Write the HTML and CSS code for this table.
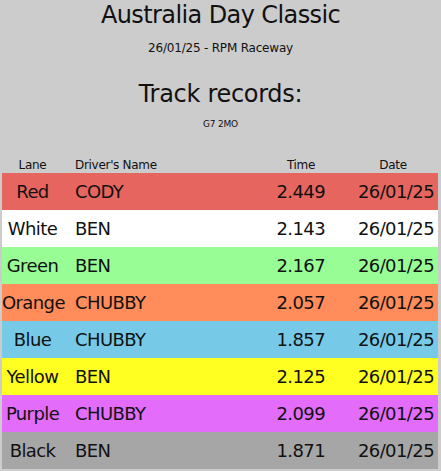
FILE: index.html
```html
<!DOCTYPE html>
<html>
<head>
<meta charset="utf-8">
<link rel="stylesheet" href="styles.css">
</head>
<body>
<header class="head">
  <h1 class="title">Australia Day Classic</h1>
  <p class="sub">26/01/25 - RPM Raceway</p>
  <h2 class="records">Track records:</h2>
  <p class="model">G7 2MO</p>
</header>
<div class="table">
  <div class="row hdr">
    <div class="lane">Lane</div><div class="name">Driver's Name</div><div class="time">Time</div><div class="date">Date</div>
  </div>
  <div class="row red"><div class="lane">Red</div><div class="name">CODY</div><div class="time">2.449</div><div class="date">26/01/25</div></div>
  <div class="row white"><div class="lane">White</div><div class="name">BEN</div><div class="time">2.143</div><div class="date">26/01/25</div></div>
  <div class="row green"><div class="lane">Green</div><div class="name">BEN</div><div class="time">2.167</div><div class="date">26/01/25</div></div>
  <div class="row orange"><div class="lane">Orange</div><div class="name">CHUBBY</div><div class="time">2.057</div><div class="date">26/01/25</div></div>
  <div class="row blue"><div class="lane">Blue</div><div class="name">CHUBBY</div><div class="time">1.857</div><div class="date">26/01/25</div></div>
  <div class="row yellow"><div class="lane">Yellow</div><div class="name">BEN</div><div class="time">2.125</div><div class="date">26/01/25</div></div>
  <div class="row purple"><div class="lane">Purple</div><div class="name">CHUBBY</div><div class="time">2.099</div><div class="date">26/01/25</div></div>
  <div class="row black"><div class="lane">Black</div><div class="name">BEN</div><div class="time">1.871</div><div class="date">26/01/25</div></div>
</div>
</body>
</html>
```
FILE: styles.css
```css
html, body {
  margin: 0;
  padding: 0;
  background: #cccccc;
  font-family: "DejaVu Sans", Verdana, sans-serif;
  color: #111;
}
.head {
  text-align: center;
}
.title {
  margin: 0;
  padding-top: 1px;
  font-size: 24px;
  font-weight: normal;
  line-height: 28px;
  letter-spacing: -0.6px;
}
.sub {
  margin: 12px 0 0;
  font-size: 12px;
  line-height: 14px;
  letter-spacing: -0.2px;
}
.records {
  margin: 25px 0 0;
  font-size: 24px;
  font-weight: normal;
  line-height: 28px;
  letter-spacing: -0.3px;
}
.model {
  margin: 11px 0 0;
  font-size: 9px;
  line-height: 10px;
  letter-spacing: -0.2px;
}
.table {
  margin: 27px 3px 0 2px;
}
.row {
  display: grid;
  grid-template-columns: 61px 1fr 56px 109px;
  align-items: center;
  height: 37px;
  font-size: 18px;
  letter-spacing: -0.6px;
}
.row.hdr {
  height: 17px;
  font-size: 12px;
  letter-spacing: -0.3px;
}
.lane { text-align: center; }
.name { padding-left: 12px; }
.time { text-align: right; padding-right: 4px; }
.date { text-align: right; padding-right: 4px; }
.hdr .time { text-align: center; padding-right: 0; }
.hdr .date { text-align: center; padding: 0 0 0 19px; }
.red { background: #e6665f; }
.white { background: #ffffff; }
.green { background: #98fd94; }
.orange { background: #ff8c5a; }
.blue { background: #76cae8; }
.yellow { background: #ffff22; }
.purple { background: #e36dfa; }
.black { background: #a6a6a6; }
```
